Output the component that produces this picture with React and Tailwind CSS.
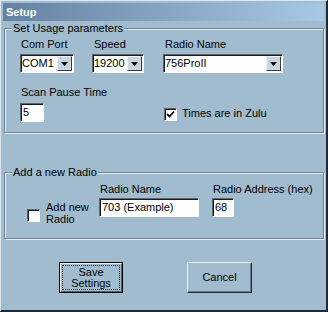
import React from "react";

const sunken = "border border-t-[#5c6670] border-l-[#5c6670] border-b-white border-r-white shadow-[inset_1px_1px_0_#1a1a1a]";

const ComboBox = ({ value, width }) => {
  return (
    <div className={`flex h-[19px] bg-white ${sunken} ${width}`}>
      <span className="flex-1 pl-[1px] leading-[17px] text-black">{value}</span>
      <div className="m-[1px] flex w-[15px] items-center justify-center border border-t-[#eef3f7] border-l-[#eef3f7] border-b-[#3a3a3a] border-r-[#3a3a3a] bg-[#c9d6e0]">
        <svg width="7" height="4" viewBox="0 0 7 4">
          <path d="M0 0h7L3.5 4z" fill="#000" />
        </svg>
      </div>
    </div>
  );
};

const TextBox = ({ value, width }) => {
  return (
    <div className={`h-[19px] bg-white pl-[2px] leading-[17px] text-black ${sunken} ${width}`}>
      {value}
    </div>
  );
};

const CheckBox = ({ checked }) => {
  return (
    <div className={`flex h-[13px] w-[13px] shrink-0 items-center justify-center bg-white ${sunken}`}>
      {checked && (
        <svg width="9" height="9" viewBox="0 0 9 9">
          <path d="M1 4l2.5 2.5L8 1.5" fill="none" stroke="#000" strokeWidth="1.8" />
        </svg>
      )}
    </div>
  );
};

const groupBox = "ml-[1px] w-[320px] border border-[#6d8296] pl-[7px] shadow-[inset_1px_1px_0_#e6eef4,1px_1px_0_#e6eef4]";

const App = () => {
  return (
    <div
      className="flex h-[312px] w-[328px] flex-col border-t border-l border-r-2 border-b-2 border-t-[#dce7ef] border-l-[#dce7ef] border-r-[#1f2a34] border-b-[#1f2a34] bg-[#a1bccf] px-[2px] pt-[2px] text-[11px] leading-[13px] text-black"
      style={{ fontFamily: '"Liberation Sans", Arial, sans-serif' }}
    >
      <div className="h-[18px] bg-gradient-to-r from-[#6483a2] to-[#a8c8e8] pl-[3px] pt-[3px] font-bold text-white">
        Setup
      </div>

      <fieldset className={`mt-[1px] pb-[10px] ${groupBox}`}>
        <legend className="bg-[#a1bccf] px-[1px]">Set Usage parameters</legend>
        <div className="flex pt-[3px]">
          <div className="ml-[8px] w-[54px]">
            <div className="pl-[1px]">Com Port</div>
            <div className="mt-[3px]">
              <ComboBox value="COM1" width="w-[54px]" />
            </div>
          </div>
          <div className="ml-[18px] w-[52px]">
            <div className="pl-[2px]">Speed</div>
            <div className="mt-[3px]">
              <ComboBox value="19200" width="w-[52px]" />
            </div>
          </div>
          <div className="ml-[19px] w-[120px]">
            <div className="pl-[2px]">Radio Name</div>
            <div className="mt-[3px]">
              <ComboBox value="756ProII" width="w-[120px]" />
            </div>
          </div>
        </div>
        <div className="mt-[13px] flex">
          <div className="ml-[8px] w-[144px]">
            <div className="pl-[1px]">Scan Pause Time</div>
            <div className="mt-[4px]">
              <TextBox value="5" width="w-[24px]" />
            </div>
          </div>
          <div className="mt-[22px] flex gap-[5px]">
            <CheckBox checked />
            <span className="-mt-[1px]">Times are in Zulu</span>
          </div>
        </div>
      </fieldset>

      <fieldset className={`mt-[33px] pb-[13px] ${groupBox}`}>
        <legend className="bg-[#a1bccf] px-[1px]">Add a new Radio</legend>
        <div className="flex pt-[4px]">
          <div className="ml-[15px] flex w-[72px] items-start gap-[6px] pt-[18px]">
            <div className="mt-[8px]">
              <CheckBox />
            </div>
            <span className="leading-[12px]">
              Add new
              <br />
              Radio
            </span>
          </div>
          <div className="w-[100px]">
            <div className="pl-[1px]">Radio Name</div>
            <div className="mt-[2px]">
              <TextBox value="703 (Example)" width="w-[100px]" />
            </div>
          </div>
          <div className="ml-[13px]">
            <div className="pl-[1px]">Radio Address (hex)</div>
            <div className="mt-[2px]">
              <TextBox value="68" width="w-[22px]" />
            </div>
          </div>
        </div>
      </fieldset>

      <div className="mt-[23px] flex">
        <button className="ml-[56px] h-[31px] w-[64px] border border-black bg-[#a1bccf] text-[11px] leading-[11px] text-black">
          <div className="flex h-full w-full border border-t-[#eef3f7] border-l-[#eef3f7] border-b-[#55606a] border-r-[#55606a] p-[1px]">
            <div className="flex h-full w-full items-center justify-center border border-dotted border-[#222] text-center">
              <span>
                Save
                <br />
                Settings
              </span>
            </div>
          </div>
        </button>
        <button className="ml-[64px] h-[31px] w-[65px] border border-t-[#eef3f7] border-l-[#eef3f7] border-b-[#1f2a34] border-r-[#1f2a34] bg-[#a1bccf] text-[11px] text-black shadow-[inset_-1px_-1px_0_#6d7c88]">
          Cancel
        </button>
      </div>
    </div>
  );
};

export default App;
